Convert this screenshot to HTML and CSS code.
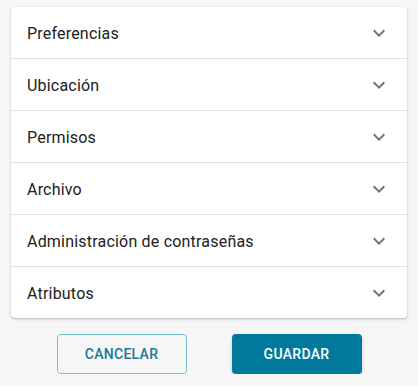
FILE: index.html
```html
<!DOCTYPE html>
<html lang="es">
<head>
<meta charset="utf-8">
<link rel="stylesheet" href="styles.css">
</head>
<body>
<div class="page">
  <div class="card">
    <div class="row"><span class="label">Preferencias</span><svg class="chev" viewBox="0 0 24 24"><path d="M16.59 8.59L12 13.17 7.41 8.59 6 10l6 6 6-6z"/></svg></div>
    <div class="row"><span class="label">Ubicación</span><svg class="chev" viewBox="0 0 24 24"><path d="M16.59 8.59L12 13.17 7.41 8.59 6 10l6 6 6-6z"/></svg></div>
    <div class="row"><span class="label">Permisos</span><svg class="chev" viewBox="0 0 24 24"><path d="M16.59 8.59L12 13.17 7.41 8.59 6 10l6 6 6-6z"/></svg></div>
    <div class="row"><span class="label">Archivo</span><svg class="chev" viewBox="0 0 24 24"><path d="M16.59 8.59L12 13.17 7.41 8.59 6 10l6 6 6-6z"/></svg></div>
    <div class="row"><span class="label">Administración de contraseñas</span><svg class="chev" viewBox="0 0 24 24"><path d="M16.59 8.59L12 13.17 7.41 8.59 6 10l6 6 6-6z"/></svg></div>
    <div class="row"><span class="label">Atributos</span><svg class="chev" viewBox="0 0 24 24"><path d="M16.59 8.59L12 13.17 7.41 8.59 6 10l6 6 6-6z"/></svg></div>
  </div>
  <div class="actions">
    <button class="btn btn-outline">CANCELAR</button>
    <button class="btn btn-primary">GUARDAR</button>
  </div>
</div>
</body>
</html>
```
FILE: styles.css
```css
html, body {
  margin: 0;
  padding: 0;
  background: #f6f6f6;
  font-family: Roboto, "Noto Sans", sans-serif;
}
.page {
  padding: 7px 11px 0 11px;
}
.card {
  background: #ffffff;
  border-radius: 4px;
  box-shadow: 0 1px 3px rgba(0,0,0,0.22), 0 1px 1px rgba(0,0,0,0.08);
  overflow: hidden;
}
.row {
  display: flex;
  align-items: center;
  justify-content: space-between;
  height: 51px;
  padding: 0 16px;
  border-bottom: 1px solid #e0e0e0;
}
.row:last-child {
  border-bottom: none;
}
.label {
  font-size: 16px;
  letter-spacing: 0.2px;
  color: #212121;
  padding-top: 2px;
}
.chev {
  width: 24px;
  height: 24px;
  fill: #757575;
}
.actions {
  display: flex;
  justify-content: center;
  gap: 45px;
  margin-top: 16px;
}
.btn {
  width: 130px;
  height: 40px;
  border-radius: 4px;
  font-family: Roboto, "Noto Sans", sans-serif;
  font-size: 14px;
  font-weight: 500;
  letter-spacing: 0.3px;
  cursor: pointer;
}
.btn-outline {
  background: transparent;
  border: 1px solid #72bfd3;
  color: #167a98;
}
.btn-primary {
  background: #00799c;
  border: none;
  color: #ffffff;
  box-shadow: 0 2px 3px rgba(0,0,0,0.2);
}
```
